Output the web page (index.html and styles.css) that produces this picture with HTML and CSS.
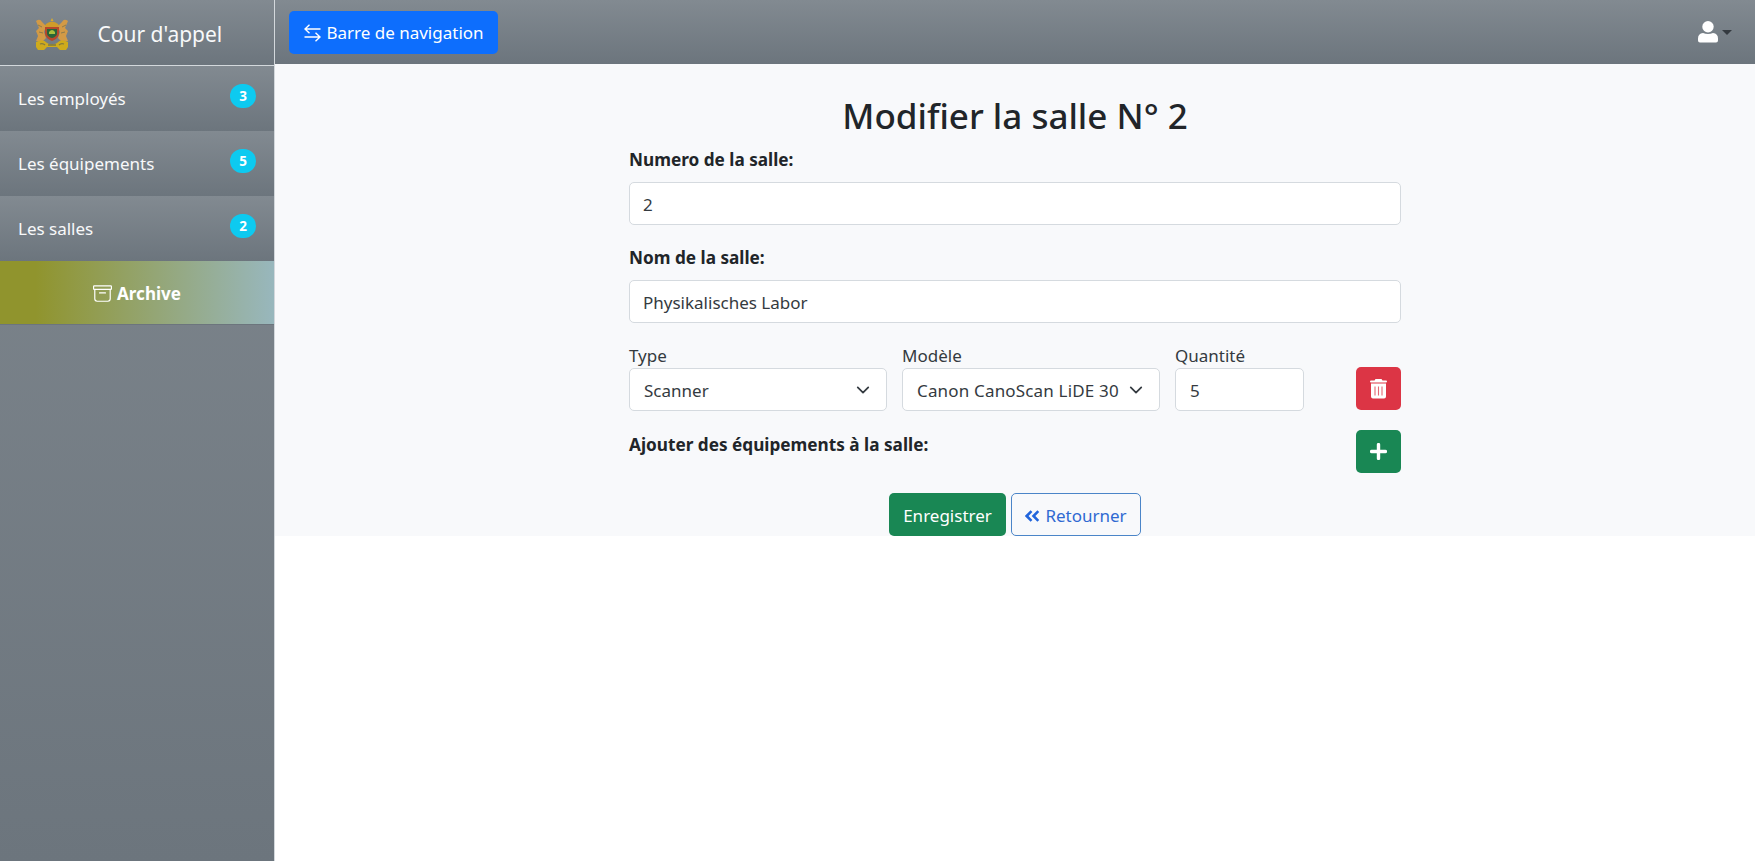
FILE: index.html
```html
<!DOCTYPE html>
<html lang="fr">
<head>
<meta charset="utf-8">
<title>Modifier la salle</title>
<link rel="stylesheet" href="styles.css">
</head>
<body>
<div class="app">
  <aside class="sidebar">
    <div class="brand">
      <svg class="crest" viewBox="0 0 34 33">
        <path d="M17 0l1.500 3h-3z" fill="#d9aa2c"/>
        <path d="M11 6q6-5 12 0l3 5H8z" fill="#cf9c2a"/>
        <path d="M1 3q4-3 6 1l4 4-2 6 2 6-3 3H1l2-5-2-5 3-3z" fill="#d39a45"/>
        <path d="M33 3q-4-3-6 1l-4 4 2 6-2 6 3 3h7l-2-5 2-5-3-3z" fill="#d39a45"/>
        <path d="M3 7l4 2M4 14l4 1M31 7l-4 2M30 14l-4 1" stroke="#8d7b4c" stroke-width="1"/>
        <path d="M10 9h14v7q-1 5-7 7-6-2-7-7z" fill="#b5482b"/>
        <path d="M12 11h10v5q-1 3-5 4-4-1-5-4z" fill="#286538"/>
        <path d="M14 14q3-4 6 0v2h-6z" fill="#a8bf3d"/>
        <path d="M1 24q7-4 11 1 5 3 10 0 4-5 11-1v5l-2 3h-6l-3-3H12l-3 3H3l-2-3z" fill="#cfab1c"/>
        <path d="M5 26q3-1 5 1M29 26q-3-1-5 1M13 27h8" stroke="#807a3e" stroke-width="1.300" fill="none"/>
      </svg>
      <span class="brand-name">Cour d'appel</span>
    </div>
    <a class="nav-item"><span>Les employés</span><span class="badge">3</span></a>
    <a class="nav-item"><span>Les équipements</span><span class="badge">5</span></a>
    <a class="nav-item"><span>Les salles</span><span class="badge">2</span></a>
    <a class="archive">
      <svg class="i-archive" viewBox="0 0 16 16" fill="currentColor"><path d="M0 2a1 1 0 0 1 1-1h14a1 1 0 0 1 1 1v2a1 1 0 0 1-1 1v7.500a2.500 2.500 0 0 1-2.500 2.500h-9A2.500 2.500 0 0 1 1 12.500V5a1 1 0 0 1-1-1zm2 3v7.500A1.500 1.500 0 0 0 3.500 14h9a1.500 1.500 0 0 0 1.500-1.500V5zm13-3H1v2h14zM5 7.500a.5.5 0 0 1 .5-.5h5a.5.5 0 0 1 0 1h-5a.5.5 0 0 1-.5-.5"/></svg>
      <span>Archive</span>
    </a>
  </aside>
  <div class="main">
    <header class="topbar">
      <button class="btn btn-primary" type="button">
        <svg class="i-swap" viewBox="0 0 17 18" fill="none" stroke="currentColor" stroke-width="1.400"><path d="M5.500.7L1 5l4.500 4.300M1 5h15.500M11.500 8.700L16 13l-4.500 4.300M16 13H.5"/></svg>
        <span>Barre de navigation</span>
      </button>
      <div class="user">
        <svg class="i-user" viewBox="0 0 20 22" fill="#fff"><circle cx="10" cy="5.700" r="5.700"/><path d="M0 19.500v-2q0-5 5-5.500 5 2 10 0 5 .5 5 5.500v2q0 2-2 2H2q-2 0-2-2z"/></svg>
        <span class="caret"></span>
      </div>
    </header>
    <form class="panel">
      <h2 class="title">Modifier la salle N° 2</h2>
      <div class="form">
        <label class="label">Numero de la salle:</label>
        <div class="control">2</div>
        <label class="label">Nom de la salle:</label>
        <div class="control"><span>Physikalisches Labor</span></div>
        <div class="row">
          <div class="col"><label class="small">Type</label>
            <div class="control"><span>Scanner</span><svg class="chev" viewBox="0 0 16 16"><path d="m2 5 6 6 6-6"/></svg></div></div>
          <div class="col"><label class="small">Modèle</label>
            <div class="control"><span class="model">Canon CanoScan LiDE 30</span><svg class="chev" viewBox="0 0 16 16"><path d="m2 5 6 6 6-6"/></svg></div></div>
          <div class="col qty"><label class="small">Quantité</label>
            <div class="control">5</div></div>
          <button class="btn btn-icon btn-danger" type="button">
            <svg class="i-trash" viewBox="0 0 17 20"><path fill="#fff" d="M5.500 0h6l1 1.500H16q1 0 1 1t-1 1H1q-1 0-1-1t1-1h3.500zM1 4.500h15V17.500q0 2-2 2H3q-2 0-2-2z"/><path d="M5 7.500v9M8.500 7.500v9M12 7.500v9" stroke="#dc3545" stroke-opacity=".75" stroke-width="1.100"/></svg>
          </button>
        </div>
        <div class="add">
          <span class="label">Ajouter des équipements à la salle:</span>
          <button class="btn btn-icon btn-success" type="button">
            <svg class="i-plus" viewBox="0 0 16 16"><path d="M8 1.500v13M1.500 8h13" stroke="#fff" stroke-width="3.200" stroke-linecap="round"/></svg>
          </button>
        </div>
        <div class="actions">
          <button class="btn btn-success save" type="button"><span>Enregistrer</span></button>
          <button class="btn btn-outline" type="button">
            <svg class="i-back" viewBox="0 0 15 12"><path d="M6.500 1.200L1.700 6l4.800 4.800M13.300 1.200L8.500 6l4.800 4.800"/></svg>
            <span>Retourner</span>
          </button>
        </div>
      </div>
    </form>
  </div>
</div>
</body>
</html>
```

FILE: styles.css
```css
* { box-sizing: border-box; }
body { margin: 0; background: #fff; color: #212529; font: 17px/26px "Noto Sans", "Open Sans", sans-serif; }
h2 { margin: 0; }
span, label { white-space: nowrap; }
.app { display: flex; height: 861px; overflow: hidden; }

.sidebar { width: 275px; flex: none; border-right: 1px solid #d3d8dc; background: linear-gradient(#80888f, #6c757d); color: #fff; }
.brand { height: 66px; display: flex; align-items: center; padding: 0 0 0 35px; border-bottom: 1px solid #d3d8dc; background: linear-gradient(#828a91, #6c757d); }
.crest { width: 34px; height: 33px; margin-top: 3px; filter: blur(.4px); }
.brand-name { margin-left: 28.500px; padding-top: 3px; font-size: 21px; color: #f8f9fa; }
.nav-item { height: 65px; display: flex; justify-content: space-between; align-items: center; padding: 0 18px; background: linear-gradient(#828a91, #6c757d); color: #f8f9fa; }
.badge { width: 26px; height: 24px; margin-bottom: 5px; border-radius: 12px; background: #0dcaf0; font-size: 13.500px; font-weight: 700; line-height: 24px; text-align: center; color: #fff; }
.archive { height: 64px; display: flex; justify-content: center; align-items: center; gap: 5px; padding-top: 2px; border-bottom: 1px solid #6c757d; background: linear-gradient(90deg, #90942d 13%, #98b7bd); font-weight: 700; color: #fff; }
.i-archive { width: 19px; height: 19px; }

.main { flex: 1; min-width: 0; }
.topbar { height: 64px; display: flex; justify-content: space-between; align-items: center; padding: 1px 23px 0 14px; background: linear-gradient(#828a91, #6c757d); }
.btn { height: 43px; margin: 0; display: flex; align-items: center; justify-content: center; gap: 6px; padding: 0; border: 0; border-radius: 5px; font: inherit; color: #fff; }
.btn-primary { width: 209px; gap: 5px; padding-left: 1px; background: #0d6efd; }
.i-swap { width: 17px; height: 18px; }
.user { display: flex; align-items: center; gap: 4px; }
.i-user { width: 20px; height: 22px; margin-bottom: 2px; }
.caret { margin-bottom: 1px; border: 5.500px solid transparent; border-top-color: #343a40; border-bottom: 0; }

.panel { height: 472px; background: #f8f9fb; }
.title { padding-top: 30px; height: 82px; font-size: 35px; line-height: 44px; font-weight: 500; text-align: center; }
.form { width: 772px; margin: 0 auto; }
.label { display: block; line-height: 27px; font-size: 17.200px; font-weight: 700; }
.control { height: 43px; display: flex; align-items: center; justify-content: space-between; padding: 2px 14px 0 13px; border: 1px solid #d5dadf; border-radius: 5px; background: #fff; color: #343a40; }
.label + .control { margin: 9px 0 19px; }
.row { display: flex; gap: 15px; align-items: flex-end; }
.col { width: 258px; }
.col .control { padding-left: 14px; }
.model { letter-spacing: .17px; }
.qty { width: 129px; }
.small { display: block; padding-top: 1px; line-height: 25px; color: #343a40; }
.chev { width: 14px; height: 14px; margin: 0 2px 2px 0; fill: none; stroke: #343a40; stroke-width: 2; stroke-linecap: round; stroke-linejoin: round; }
.btn-icon { width: 45px; }
.row .btn-icon { margin: 0 0 1px auto; }
.btn-danger { background: #dc3545; }
.btn-success { background: #198754; }
.i-trash { width: 17px; height: 20px; }
.i-plus { width: 17px; height: 17px; }
.add { display: flex; justify-content: space-between; padding-top: 18px; }
.add .label { padding-top: 2px; }
.add .btn { margin-top: .5px; padding-top: 1px; }
.actions { display: flex; justify-content: center; gap: 5px; padding-top: 20.500px; }
.save { width: 117px; padding-top: 3px; }
.btn-outline { width: 130px; gap: 5px; padding-top: 3px; border: 1px solid #4b85c8; background: transparent; color: #2f69d2; }
.i-back { width: 15px; height: 12px; margin-bottom: 1px; fill: none; stroke: #2165dc; stroke-width: 2.600; }
```
